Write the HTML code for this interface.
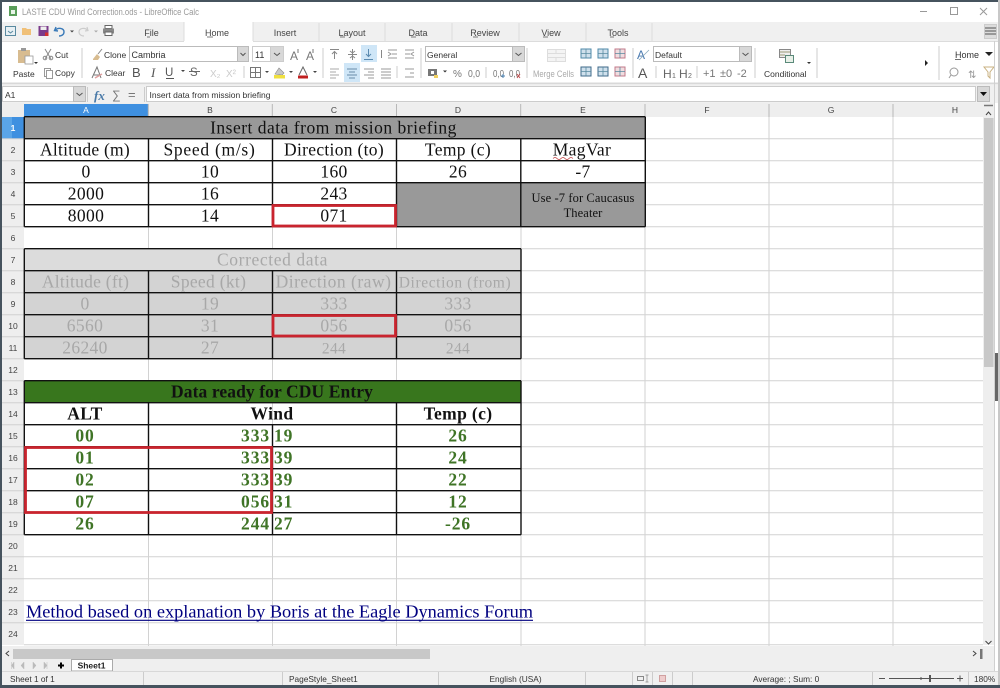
<!DOCTYPE html>
<html><head><meta charset="utf-8"><title>LASTE CDU Wind Correction.ods - LibreOffice Calc</title>
<style>
html,body{margin:0;padding:0;background:#fff;width:1000px;height:688px;overflow:hidden}
svg{display:block}
text{font-family:"Liberation Sans",sans-serif;font-size:9px;fill:#333}
.s{font-family:"Liberation Serif",serif;font-size:17.5px;fill:#111;text-anchor:middle;letter-spacing:.35px}
.g{fill:#a8a8a8}
.b{font-weight:bold}
.gr{fill:#3f7426;font-weight:bold;letter-spacing:.9px}
.c{text-anchor:middle}
.h{fill:#444;text-anchor:middle;font-size:8.5px}
.t{font-size:9px;text-anchor:middle;fill:#444}
</style></head><body>
<svg width="1000" height="688" viewBox="0 0 1000 688" xmlns="http://www.w3.org/2000/svg">
<rect width="1000" height="688" fill="#fff"/>
<!-- tab bar -->
<rect x="2" y="22" width="996" height="19" fill="#f0f0f0"/>
<rect x="184" y="22" width="69" height="20" fill="#fff"/>
<path d="M184 22V41M253 22V41M319 23V41M385 23V41M452 23V41M519 23V41M586 23V41M652 23V41" stroke="#dcdcdc" fill="none"/>
<path d="M2 41.500H184M253 41.500H998" stroke="#dcdcdc"/>
<!-- title -->
<rect x="9" y="6" width="8" height="10" fill="#5a9e5a"/><rect x="11" y="10" width="4" height="4" fill="#e8f4e8"/>
<text x="22" y="15" fill="#9a9a9a" style="fill:#9a9a9a;font-size:9.600px" textLength="177" lengthAdjust="spacingAndGlyphs">LASTE CDU Wind Correction.ods - LibreOffice Calc</text>
<path d="M920 11.500H927" stroke="#999"/><rect x="950.500" y="7.500" width="7" height="7" fill="none" stroke="#999"/><path d="M980 8L987 15M987 8L980 15" stroke="#999"/>
<!-- quick toolbar -->
<rect x="5.500" y="26.500" width="10" height="9" fill="#e8f0f4" stroke="#5a8aa0"/><path d="M8 31L10.500 33L13 31" stroke="#5a8aa0" fill="none"/>
<path d="M22 35V28H26L27 29H31V35Z" fill="#f0c078"/>
<rect x="38.500" y="26" width="10" height="10" fill="#7a3a8a"/><rect x="40.500" y="26.500" width="6" height="3.500" fill="#eee"/><rect x="45" y="32.500" width="3.500" height="3.500" fill="#d03030"/>
<path d="M56 27L54.500 30.500L58 31M55 30.500C58 27 64 28 64 32C64 35 61 36 59 36" stroke="#3a7ab8" stroke-width="1.400" fill="none"/>
<path d="M70 30.500H74L72 32.500Z" fill="#444"/>
<path d="M87 27L88 30.500L85 31M88 30.500C85 27 79 28 79 32C79 35 82 36 84 36" stroke="#ccc" stroke-width="1.200" fill="none"/>
<path d="M94 30.500H98L96 32.500Z" fill="#aaa"/>
<rect x="105" y="25.500" width="7" height="3" fill="#fff" stroke="#666"/><rect x="103" y="28.500" width="11" height="5" fill="#888"/><rect x="105" y="32" width="7" height="3.500" fill="#fff" stroke="#666"/>
<!-- tab labels -->
<text class="t" x="151.500" y="36">File</text><path d="M147 37H150" stroke="#444" stroke-width=".7"/>
<text class="t" x="217" y="36">Home</text><path d="M207 37H213" stroke="#444" stroke-width=".7"/>
<text class="t" x="285" y="36">Insert</text>
<text class="t" x="352" y="36">Layout</text><path d="M340 37H345" stroke="#444" stroke-width=".7"/>
<text class="t" x="418" y="36">Data</text><path d="M411 37H416" stroke="#444" stroke-width=".7"/>
<text class="t" x="485" y="36">Review</text><path d="M473 37H478" stroke="#444" stroke-width=".7"/>
<text class="t" x="551" y="36">View</text><path d="M543 37H548" stroke="#444" stroke-width=".7"/>
<text class="t" x="618" y="36">Tools</text><path d="M610 37H614" stroke="#444" stroke-width=".7"/>
<rect x="984.500" y="24.500" width="12" height="14" fill="#dcdcdc" stroke="#ccc"/><path d="M985 28H996M985 31H996M985 34H996" stroke="#555"/>
<!-- ribbon -->
<path d="M2 83.500H998" stroke="#d8d8d8" stroke-width="2"/>
<rect x="18" y="50" width="12" height="13" fill="#d8bc90"/><rect x="21" y="48" width="5" height="3" fill="#999"/><rect x="25" y="56" width="8" height="8" fill="#fff" stroke="#999" stroke-width=".8"/>
<path d="M34 62H38L36 64Z" fill="#333"/>
<text x="13" y="77" style="font-size:8.500px">Paste</text>
<path d="M45 49L51 59M51 49L45 59" stroke="#888" fill="none"/><circle cx="45" cy="58" r="1.800" fill="none" stroke="#888"/><circle cx="51" cy="58" r="1.800" fill="none" stroke="#888"/>
<text x="55" y="58" style="font-size:8.500px">Cut</text>
<rect x="44.500" y="68.500" width="6" height="8" fill="#fff" stroke="#999"/><rect x="46.500" y="70.500" width="6" height="8" fill="#fff" stroke="#999"/>
<text x="55" y="76" style="font-size:8.500px">Copy</text>
<path d="M82 48V78" stroke="#ccc"/>
<path d="M93 59L97 54L100 57L98 60H93Z" fill="#d8bc90"/><path d="M98 54L102 49" stroke="#888"/>
<text x="104" y="58" style="font-size:8.500px">Clone</text>
<path d="M92 78L97 67L101 78M94 75H100" stroke="#777" fill="none"/><path d="M95 78L102 74" stroke="#e0a0a0" stroke-width="1.500"/>
<text x="105" y="76" style="font-size:8.500px">Clear</text>
<!-- font box -->
<rect x="129.500" y="46.500" width="119" height="15" fill="#fff" stroke="#bbb"/><rect x="237.500" y="46.500" width="11" height="15" fill="#d8d8d8" stroke="#bbb"/><path d="M240.500 53L243 55.500L245.500 53" stroke="#555" fill="none"/>
<text x="131.500" y="58" style="font-size:9px">Cambria</text>
<rect x="252.500" y="46.500" width="31" height="15" fill="#fff" stroke="#ccc"/><rect x="270.500" y="46.500" width="13" height="15" fill="#d8d8d8" stroke="#ccc"/><path d="M274 53L277 55.500L280 53" stroke="#555" fill="none"/>
<text x="255" y="58" style="font-size:9px">11</text>
<text x="290" y="60" style="font-size:12px;fill:#777">A</text><text x="306" y="60" style="font-size:12px;fill:#777">A</text>
<path d="M298 49V53M313 49V53" stroke="#777"/>
<path d="M323 48V78" stroke="#ccc"/>
<text x="132" y="77" style="font-size:13px;fill:#555">B</text>
<text x="151" y="77" style="font-family:'Liberation Serif',serif;font-style:italic;font-size:13px;fill:#555">I</text>
<text x="165" y="76" style="font-size:11.500px;fill:#555">U</text><path d="M166 78.500H174" stroke="#555"/>
<path d="M181 70H185L183 72Z" fill="#444"/>
<text x="190" y="76" style="font-size:11.500px;fill:#666">S</text><path d="M189 71.500H200" stroke="#666"/>
<text x="210" y="77" style="font-size:10px;fill:#ccc">X₂</text><text x="226" y="77" style="font-size:10px;fill:#ccc">X²</text>
<path d="M244 66V78" stroke="#ccc"/>
<rect x="250.500" y="67.500" width="10" height="10" fill="none" stroke="#777"/><path d="M255.500 68V77M251 72.500H260" stroke="#777"/>
<path d="M265 71H269L267 73Z" fill="#444"/>
<path d="M275 74L279 68L284 73L282 75Z" fill="#c8c8c8" stroke="#888" stroke-width=".6"/><rect x="274" y="75" width="11" height="3.500" fill="#f0e040"/>
<path d="M289 71H293L291 73Z" fill="#444"/>
<path d="M299 75L303 67L307 75" stroke="#666" fill="none"/><rect x="298" y="75.500" width="10" height="3" fill="#c02020"/>
<path d="M313 71H317L315 73Z" fill="#444"/>
<path d="M323 66V78" stroke="#ccc"/>
<!-- alignment -->
<rect x="361" y="45" width="16" height="17" fill="#cfe6f7"/><rect x="344" y="63" width="16" height="19" fill="#cfe6f7"/>
<g stroke="#888" fill="none">
<path d="M330 49.500H339M334.500 52V59M332 54L334.500 51.500L337 54"/>
<path d="M348 54.500H357M352.500 49V60M350 51L352.500 53L355 51M350 58L352.500 56L355 58"/>
<path d="M364 59.500H373M368.500 49V56M366 54L368.500 56.500L371 54" stroke="#5a8ab0"/>
<path d="M381.500 50V58"/>
<path d="M388 50H397M392 54H397M388 58H397M388 52L391 54L388 56" stroke="#999"/>
<path d="M405 50H414M405 54H410M405 58H414M414 52L411 54L414 56" stroke="#999"/>
<path d="M330 69H339M330 72H336M330 75H339M330 78H336" stroke="#aaa"/>
<path d="M347 69H357M349 72H355M347 75H357M349 78H355" stroke="#6a8ca8"/>
<path d="M364 69H374M368 72H374M364 75H374M368 78H374" stroke="#999"/>
<path d="M381 69H391M381 72H391M381 75H391M381 78H391" stroke="#999"/>
<path d="M397 66V78" stroke="#ccc"/>
<path d="M405 69H414M410 73H414M405 77H414" stroke="#999"/>
<path d="M421 48V78" stroke="#ccc"/>
</g>
<!-- number -->
<rect x="425.500" y="46.500" width="99" height="15" fill="#fff" stroke="#bbb"/><rect x="512.500" y="46.500" width="12" height="15" fill="#d8d8d8" stroke="#bbb"/><path d="M515.500 53L518.500 55.500L521.500 53" stroke="#555" fill="none"/>
<text x="427" y="58" style="font-size:8.500px">General</text>
<rect x="428" y="69" width="9" height="7" fill="#777"/><rect x="431" y="71" width="3" height="3" fill="#fff"/><rect x="434" y="75" width="4" height="3" fill="#f0d060"/>
<path d="M443 70.500H447L445 72.500Z" fill="#333"/>
<text x="453" y="77" style="font-size:10px;fill:#777">%</text>
<text x="468" y="77" style="font-size:10px;fill:#777" textLength="12" lengthAdjust="spacingAndGlyphs">0,0</text>
<path d="M486 67V78" stroke="#ccc"/>
<text x="493" y="77" style="font-size:10px;fill:#777" textLength="11" lengthAdjust="spacingAndGlyphs">0,0</text><text x="509" y="77" style="font-size:10px;fill:#777" textLength="11" lengthAdjust="spacingAndGlyphs">0,0</text>
<path d="M503 74L503 78M501 76H505" stroke="#4a80b0"/><path d="M517 74L520 78M520 74L517 78" stroke="#c05050"/>
<path d="M527 48V78" stroke="#ccc"/>
<!-- merge -->
<g stroke="#ddd" fill="none"><rect x="547.500" y="49.500" width="18" height="12" fill="#f4f4f4"/><path d="M548 53.500H565M548 57.500H565M556 50V53M556 58V61"/></g>
<text x="533" y="77" style="font-size:8.800px;fill:#aaa" textLength="41" lengthAdjust="spacingAndGlyphs">Merge Cells</text>
<g>
<rect x="581" y="49" width="10" height="9" fill="#cfe0ec" stroke="#4f8aaa"/><rect x="598" y="49" width="10" height="9" fill="#cfe0ec" stroke="#4f8aaa"/><rect x="615" y="49" width="10" height="9" fill="#f0dde0" stroke="#c07a8a"/>
<rect x="581" y="67" width="10" height="9" fill="#cfe0ec" stroke="#3f6a8a"/><rect x="598" y="67" width="10" height="9" fill="#cfe0ec" stroke="#3f6a8a"/><rect x="615" y="67" width="10" height="9" fill="#f0dde0" stroke="#c07a8a"/>
<path d="M586 49V58M581 53.500H591M603 49V58M598 53.500H608M620 49V58M615 53.500H625M586 67V76M581 71.500H591M603 67V76M598 71.500H608M620 67V76M615 71.500H625" stroke="#5a8aa0" stroke-width=".8"/>
</g>
<path d="M633 48V78" stroke="#ccc"/>
<text x="637" y="59" style="font-size:12px;fill:#4a7ab0">A</text><path d="M639 60L649 50" stroke="#8ab" stroke-width=".8"/>
<rect x="653.500" y="46.500" width="98" height="15" fill="#fff" stroke="#bbb"/><rect x="739.500" y="46.500" width="12" height="15" fill="#d8d8d8" stroke="#bbb"/><path d="M742.500 53L745.500 55.500L748.500 53" stroke="#555" fill="none"/>
<text x="655" y="58" style="font-size:8.500px">Default</text>
<text x="638" y="78" style="font-size:14px;fill:#555">A</text>
<path d="M656 66V78" stroke="#ccc"/>
<text x="663" y="78" style="font-size:12px;fill:#666">H</text><text x="672" y="78" style="font-size:7px;fill:#666">1</text>
<text x="679" y="78" style="font-size:12px;fill:#666">H</text><text x="688" y="78" style="font-size:7px;fill:#666">2</text>
<path d="M697 66V78" stroke="#ccc"/>
<text x="703" y="77" style="font-size:11px;fill:#777">+1</text><text x="720" y="77" style="font-size:11px;fill:#777">±0</text><text x="737" y="77" style="font-size:11px;fill:#777">-2</text>
<path d="M755 48V78" stroke="#ccc"/>
<rect x="779.500" y="49.500" width="11" height="8" fill="#eee" stroke="#888"/><rect x="785.500" y="55.500" width="8" height="7" fill="#e8f0e8" stroke="#5a8a7a"/><path d="M780 52H790M780 55H785" stroke="#997" />
<text x="764" y="77" style="font-size:8.500px">Conditional</text>
<path d="M807 62H811L809 64Z" fill="#333"/>
<path d="M817 48V78" stroke="#ccc"/>
<path d="M925 60V66L928 63Z" fill="#222"/>
<path d="M939 46V80" stroke="#ccc"/>
<text x="955" y="58" style="font-size:9px">Home</text><path d="M955 59.500H961" stroke="#333" stroke-width=".7"/>
<path d="M985 52H993L989 56Z" fill="#222"/>
<circle cx="954" cy="72" r="4" fill="none" stroke="#999"/><path d="M951 75L949 78" stroke="#999"/>
<text x="968" y="78" style="font-size:10px;fill:#999">⇅</text>
<path d="M984 67H994L990 72V78L988 76V72Z" fill="#fff" stroke="#c8b080"/>
<!-- formula bar -->
<rect x="2" y="85" width="996" height="18" fill="#f0f0f0"/>
<rect x="2.500" y="86.500" width="83" height="15" fill="#fff" stroke="#ccc"/><rect x="73.500" y="86.500" width="12" height="15" fill="#d8d8d8" stroke="#bbb"/><path d="M76.500 93L79.500 95.500L82.500 93" stroke="#555" fill="none"/>
<text x="5" y="98" style="font-size:8.500px">A1</text>
<path d="M87.500 87V102" stroke="#ccc"/>
<text x="94" y="100" style="font-family:'Liberation Serif',serif;font-style:italic;font-weight:bold;font-size:13px;fill:#4a7aa8">fx</text>
<text x="112" y="99" style="font-size:12px;fill:#777">∑</text>
<text x="128" y="99" style="font-size:13px;fill:#777">=</text>
<path d="M144.500 87V102" stroke="#ccc"/>
<rect x="146.500" y="86.500" width="829" height="15" fill="#fff" stroke="#ccc"/>
<text x="149.500" y="98" style="font-size:8.500px">Insert data from mission briefing</text>
<rect x="977.500" y="86.500" width="12" height="15" fill="#d8d8d8" stroke="#bbb"/><path d="M980 92H987L983.500 96Z" fill="#111"/>
<!-- col headers -->
<rect x="2" y="103" width="981" height="14" fill="#eeeeee"/>
<rect x="24" y="104" width="124" height="13" fill="#3f90e0"/>
<path d="M148.300 104V117M272.300 104V117M396.500 104V117M520.700 104V117M645 104V117M769 104V117M893 104V117" stroke="#b8b8b8"/>
<text class="h" x="86" y="113" style="fill:#fff">A</text><text class="h" x="210" y="113">B</text><text class="h" x="334" y="113">C</text><text class="h" x="458" y="113">D</text><text class="h" x="583" y="113">E</text><text class="h" x="707" y="113">F</text><text class="h" x="831" y="113">G</text><text class="h" x="955" y="113">H</text>
<!-- row headers -->
<rect x="2" y="117" width="22" height="528" fill="#eeeeee"/>
<rect x="2" y="117" width="22" height="22" fill="#3f90e0"/><rect x="2" y="117" width="10" height="22" fill="#5aa5e8"/>
<path d="M2 160.700H24M2 182.700H24M2 204.700H24M2 226.700H24M2 248.700H24M2 270.700H24M2 292.700H24M2 314.700H24M2 336.700H24M2 358.700H24M2 380.700H24M2 402.700H24M2 424.700H24M2 446.700H24M2 468.700H24M2 490.700H24M2 512.700H24M2 534.700H24M2 556.700H24M2 578.700H24M2 600.700H24M2 622.700H24M2 138.700H24" stroke="#d0d0d0"/>
<g class="rh">
<text class="h" x="13" y="131" style="fill:#fff;font-weight:bold">1</text>
<text class="h" x="13" y="153">2</text><text class="h" x="13" y="175">3</text><text class="h" x="13" y="197">4</text><text class="h" x="13" y="219">5</text><text class="h" x="13" y="241">6</text><text class="h" x="13" y="263">7</text><text class="h" x="13" y="285">8</text><text class="h" x="13" y="307">9</text><text class="h" x="13" y="329">10</text><text class="h" x="13" y="351">11</text><text class="h" x="13" y="373">12</text><text class="h" x="13" y="395">13</text><text class="h" x="13" y="417">14</text><text class="h" x="13" y="439">15</text><text class="h" x="13" y="461">16</text><text class="h" x="13" y="483">17</text><text class="h" x="13" y="505">18</text><text class="h" x="13" y="527">19</text><text class="h" x="13" y="549">20</text><text class="h" x="13" y="571">21</text><text class="h" x="13" y="593">22</text><text class="h" x="13" y="615">23</text><text class="h" x="13" y="637">24</text>
</g>
<!-- gridlines -->
<path d="M24 138.700H983M24 160.700H983M24 182.700H983M24 204.700H983M24 226.700H983M24 248.700H983M24 270.700H983M24 292.700H983M24 314.700H983M24 336.700H983M24 358.700H983M24 380.700H983M24 402.700H983M24 424.700H983M24 446.700H983M24 468.700H983M24 490.700H983M24 512.700H983M24 534.700H983M24 556.700H983M24 578.700H983M24 600.700H983M24 622.700H983M24 644.700H983M148.500 117V647M272.500 117V647M396.500 117V647M521 117V647M645 117V647M769 117V647M893 117V647" stroke="#d2d2d2" fill="none"/>
<!-- fills -->
<rect x="24" y="117" width="621" height="22" fill="#999999"/>
<rect x="396" y="183" width="249" height="44" fill="#999999"/>
<rect x="24" y="249" width="497" height="22" fill="#dcdcdc"/>
<rect x="24" y="271" width="497" height="88" fill="#d3d3d3"/>
<rect x="24" y="381" width="497" height="22" fill="#38761d"/>
<!-- table borders -->
<g stroke="#111" stroke-width="1.400" fill="none">
<path d="M24.300 116.700H645.300M24.300 138.700H645.300M24.300 160.700H645.300M24.300 182.700H645.300M24.300 204.700H396.500M24.300 226.700H645.300"/>
<path d="M24.300 116.700V226.700M148.500 138.700V226.700M272.500 138.700V226.700M396.500 138.700V226.700M520.800 138.700V226.700M645.300 116.700V226.700"/>
<path d="M24.300 248.700H521M24.300 270.700H521M24.300 292.700H521M24.300 314.700H521M24.300 336.700H521M24.300 358.700H521"/>
<path d="M24.300 248.700V358.700M148.500 270.700V358.700M272.500 270.700V358.700M396.500 270.700V358.700M521 248.700V358.700"/>
<path d="M24.300 380.700H521M24.300 402.700H521M24.300 424.700H521M24.300 446.700H521M24.300 468.700H521M24.300 490.700H521M24.300 512.700H521M24.300 534.700H521"/>
<path d="M24.300 380.700V534.700M148.500 402.700V534.700M272.500 424.700V534.700M396.500 402.700V534.700M521 380.700V534.700"/>
</g>
<!-- red -->
<g stroke="#c9242e" stroke-width="2.800" fill="none">
<rect x="273" y="205.500" width="122.500" height="20.500"/>
<rect x="273" y="315.500" width="122.500" height="20.500"/>
<rect x="25.500" y="447.500" width="246" height="65"/>
</g>
<!-- data -->
<text class="s" x="333.500" y="133.500" style="letter-spacing:.5px">Insert data from mission briefing</text>
<text class="s" x="85" y="155.500" style="letter-spacing:.25px">Altitude (m)</text><text class="s" x="209.500" y="155.500" style="letter-spacing:.72px">Speed (m/s)</text><text class="s" x="334" y="155.500" style="letter-spacing:.3px">Direction (to)</text><text class="s" x="458" y="155.500">Temp (c)</text><text class="s" x="582" y="155.500">MagVar</text>
<path d="M553 158.500Q555 156.500 557 158.500T561 158.500T565 158.500T569 158.500T573 158.500" stroke="#c04040" stroke-width=".7" fill="none"/>
<text class="s" x="86" y="177.500">0</text><text class="s" x="210" y="177.500">10</text><text class="s" x="334" y="177.500">160</text><text class="s" x="458" y="177.500">26</text><text class="s" x="583" y="177.500">-7</text>
<text class="s" x="86" y="199.500">2000</text><text class="s" x="210" y="199.500">16</text><text class="s" x="334" y="199.500">243</text>
<text class="s" x="86" y="221.500">8000</text><text class="s" x="210" y="221.500">14</text><text class="s" x="334" y="221.500">071</text>
<text class="s" x="583" y="202" style="font-size:12.500px;letter-spacing:.1px">Use -7 for Caucasus</text><text class="s" x="583" y="217" style="font-size:12.500px;letter-spacing:.1px">Theater</text>
<text class="s g" x="272.500" y="265.500" style="letter-spacing:.6px">Corrected data</text>
<text class="s g" x="85.500" y="287.500" style="letter-spacing:.25px">Altitude (ft)</text><text class="s g" x="208.500" y="287.500" style="letter-spacing:.3px">Speed (kt)</text><text class="s g" x="333.500" y="287.500" style="letter-spacing:.5px">Direction (raw)</text><text class="s g" x="455" y="287.500" style="font-size:15.500px;letter-spacing:.6px">Direction (from)</text>
<text class="s g" x="85" y="309.500">0</text><text class="s g" x="210" y="309.500">19</text><text class="s g" x="334" y="309.500">333</text><text class="s g" x="458" y="309.500">333</text>
<text class="s g" x="85" y="331.500">6560</text><text class="s g" x="210" y="331.500">31</text><text class="s g" x="334" y="331.500">056</text><text class="s g" x="458" y="331.500">056</text>
<text class="s g" x="85" y="353.500">26240</text><text class="s g" x="210" y="353.500">27</text><text class="s g" x="334" y="353.500" style="font-size:15.500px">244</text><text class="s g" x="458" y="353.500" style="font-size:15.500px">244</text>
<text class="s b" x="272" y="397.500" style="letter-spacing:.1px">Data ready for CDU Entry</text>
<text class="s b" x="85" y="419.500">ALT</text><text class="s b" x="272" y="419.500">Wind</text><text class="s b" x="458" y="419.500">Temp (c)</text>
<text class="s gr" x="85" y="441.500">00</text><text class="s gr" x="270" y="441.500" style="text-anchor:end">333</text><text class="s gr" x="274" y="441.500" style="text-anchor:start">19</text><text class="s gr" x="458" y="441.500">26</text>
<text class="s gr" x="85" y="463.500">01</text><text class="s gr" x="270" y="463.500" style="text-anchor:end">333</text><text class="s gr" x="274" y="463.500" style="text-anchor:start">39</text><text class="s gr" x="458" y="463.500">24</text>
<text class="s gr" x="85" y="485.500">02</text><text class="s gr" x="270" y="485.500" style="text-anchor:end">333</text><text class="s gr" x="274" y="485.500" style="text-anchor:start">39</text><text class="s gr" x="458" y="485.500">22</text>
<text class="s gr" x="85" y="507.500">07</text><text class="s gr" x="270" y="507.500" style="text-anchor:end">056</text><text class="s gr" x="274" y="507.500" style="text-anchor:start">31</text><text class="s gr" x="458" y="507.500">12</text>
<text class="s gr" x="85" y="529.500">26</text><text class="s gr" x="270" y="529.500" style="text-anchor:end">244</text><text class="s gr" x="274" y="529.500" style="text-anchor:start">27</text><text class="s gr" x="458" y="529.500">-26</text>
<text class="s" x="26" y="617.500" style="text-anchor:start;fill:#000080;letter-spacing:0" textLength="507" lengthAdjust="spacingAndGlyphs">Method based on explanation by Boris at the Eagle Dynamics Forum</text>
<path d="M26 620.300H533" stroke="#000080" stroke-width="1.200"/>
<!-- v scrollbar -->
<rect x="983" y="103" width="11" height="542" fill="#eeeeee"/>
<path d="M984 105.500H993" stroke="#777" stroke-width="1.500"/>
<path d="M986 115L988.500 112L991 115" stroke="#444" fill="none"/>
<rect x="984" y="118" width="9.500" height="249" fill="#c8c8c8"/>
<path d="M985.500 641L988.500 644L991.500 641" stroke="#444" fill="none"/>
<path d="M994.500 41V685" stroke="#d0d0d0"/>
<rect x="995" y="353" width="3" height="48" fill="#666"/>
<!-- h scrollbar -->
<rect x="2" y="646" width="992" height="25" fill="#efefef"/>
<path d="M9 651L6 653.500L9 656" stroke="#444" fill="none"/>
<rect x="13" y="649" width="417" height="10" fill="#c8c8c8"/>
<path d="M973 651L976 653.500L973 656" stroke="#444" fill="none"/>
<rect x="980" y="649" width="2.500" height="10" fill="#777"/>
<path d="M11.500 662V669M14 662V669L11.500 665.500ZM24 662V669L21 665.500ZM33 662V669L36 665.500ZM47 662V669M44 662V669L47 665.500Z" stroke="#bbb" fill="#bbb" stroke-width=".5"/>
<path d="M58 665.500H64M61 662.500V668.500" stroke="#000" stroke-width="2"/>
<rect x="71.500" y="659.500" width="41" height="11.500" fill="#fff" stroke="#aaa"/>
<text x="91.500" y="668.500" class="c b" style="font-size:8.500px;fill:#222">Sheet1</text>
<!-- status -->
<rect x="2" y="671" width="996" height="14" fill="#f0f0f0"/>
<path d="M2 671.500H998" stroke="#d8d8d8"/>
<path d="M143.500 672V685M282.500 672V685M438.500 672V685M585.500 672V685M632.500 672V685M652.500 672V685M672.500 672V685M692.500 672V685M872.500 672V685M968.500 672V685" stroke="#ccc"/>
<text x="10" y="682" style="font-size:8.300px">Sheet 1 of 1</text>
<text x="289" y="682" style="font-size:8.300px">PageStyle_Sheet1</text>
<text x="489.500" y="682" style="font-size:8.300px">English (USA)</text>
<text x="753" y="682" style="font-size:8.300px">Average: ; Sum: 0</text>
<text x="974" y="682" style="font-size:8.300px">180%</text>
<rect x="637.500" y="676.500" width="6" height="4" fill="none" stroke="#888"/><path d="M647 675V682M645.500 675H648.500M645.500 682H648.500" stroke="#888" stroke-width=".7"/>
<rect x="659.500" y="675.500" width="6" height="6" fill="#eecccc" stroke="#d0a0a0"/>
<path d="M879 678.500H885M889 678.500H954M957 678.500H963M960 675.500V681.500M921 677V680" stroke="#555"/>
<rect x="929" y="675" width="2" height="7" fill="#555"/>
<!-- window frame -->
<rect x="0" y="0" width="1000" height="2" fill="#46535e"/>
<rect x="0" y="0" width="2" height="688" fill="#46535e"/>
<rect x="998" y="0" width="2" height="688" fill="#c8c8c8"/>
<rect x="0" y="685" width="1000" height="3" fill="#46535e"/>
</svg>
</body></html>
